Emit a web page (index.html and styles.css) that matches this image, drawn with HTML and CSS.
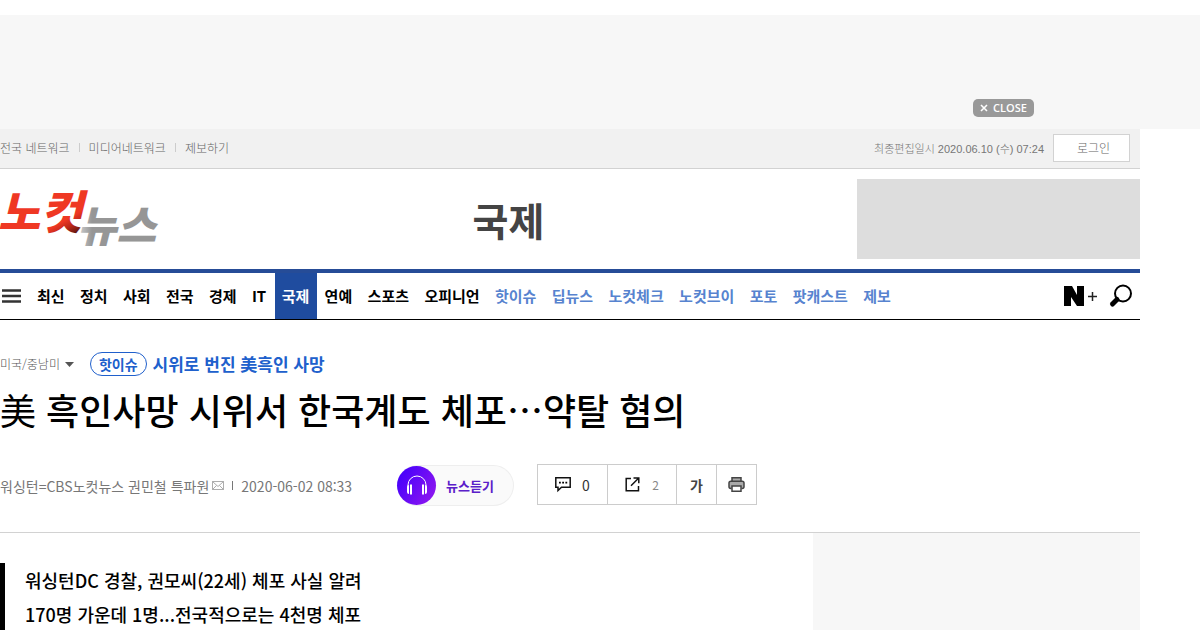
FILE: index.html
```html
<!DOCTYPE html>
<html lang="ko">
<head>
<meta charset="utf-8">
<title>美 흑인사망 시위서 한국계도 체포…약탈 혐의</title>
<link rel="stylesheet" href="styles.css">
</head>
<body>
<aside class="top-ad"><button class="close" type="button"><svg width="8" height="8" viewBox="0 0 8 8" aria-hidden="true"><path d="M1 1l6 6M7 1L1 7" stroke="#fff" stroke-width="1.6"/></svg>CLOSE</button></aside>
<div class="page">
  <div class="utility">
    <ul class="links">
      <li><a href="#">전국 네트워크</a></li>
      <li><a href="#">미디어네트워크</a></li>
      <li><a href="#">제보하기</a></li>
    </ul>
    <span class="updated">최종편집일시 2020.06.10 (수) 07:24</span>
    <button class="login" type="button">로그인</button>
  </div>
  <header class="masthead">
    <a class="logo" href="#" aria-label="노컷뉴스">
      <svg width="160" height="76" viewBox="0 0 160 76">
        <defs>
          <linearGradient id="red" gradientUnits="userSpaceOnUse" x1="60" y1="42" x2="71" y2="61"><stop offset="0" stop-color="#ef3823"/><stop offset=".4" stop-color="#b42618"/><stop offset="1" stop-color="#2a0d0a"/></linearGradient>
          <linearGradient id="gray" gradientUnits="userSpaceOnUse" x1="75" y1="0" x2="92" y2="0"><stop offset="0" stop-color="#ddd"/><stop offset="1" stop-color="#969696"/></linearGradient>
        </defs>
        <text class="logo-back" x="77" y="61" fill="url(#gray)">뉴스</text>
        <text class="logo-front" x="-2" y="48" fill="url(#red)">노컷</text>
      </svg>
    </a>
    <h2 class="section-name">국제</h2>
    <div class="banner"></div>
  </header>
  <nav class="gnb">
    <button class="menu" type="button" aria-label="전체메뉴"><svg width="19" height="14" viewBox="0 0 19 14"><path d="M0 1.5h19M0 7h19M0 12.5h19" stroke="#333" stroke-width="2.4"/></svg></button>
    <ul class="sections">
      <li><a href="#">최신</a></li><li><a href="#">정치</a></li><li><a href="#">사회</a></li><li><a href="#">전국</a></li><li><a href="#">경제</a></li><li><a href="#">IT</a></li>
      <li><a class="current" href="#">국제</a></li>
      <li><a href="#">연예</a></li><li><a href="#">스포츠</a></li><li><a href="#">오피니언</a></li>
      <li><a class="special" href="#">핫이슈</a></li><li><a class="special" href="#">딥뉴스</a></li><li><a class="special" href="#">노컷체크</a></li><li><a class="special" href="#">노컷브이</a></li><li><a class="special" href="#">포토</a></li><li><a class="special" href="#">팟캐스트</a></li><li><a class="special" href="#">제보</a></li>
    </ul>
    <a class="nplus" href="#" aria-label="N+"><svg width="33" height="20" viewBox="0 0 33 20"><path d="M0 0h8l5 9V0h7v20h-7L7 11v9H0z"/><path d="M24 10.500h9M28.500 6v9" stroke="#222" stroke-width="1.500"/></svg></a>
    <button class="search" type="button" aria-label="검색"><svg width="24" height="24" viewBox="0 0 24 24"><circle cx="14" cy="9.500" r="8" fill="#fff" stroke="#000" stroke-width="2"/><path d="M8 15.500L3.500 20" stroke="#000" stroke-width="5" stroke-linecap="round"/></svg></button>
  </nav>
  <main>
    <div class="article-head">
      <div class="topic">
        <button class="category" type="button">미국/중남미<svg width="9" height="5" viewBox="0 0 9 5"><path d="M0 0h9L4.500 5z" fill="#555"/></svg></button>
        <a class="issue" href="#"><span class="pill">핫이슈</span>시위로 번진 美흑인 사망</a>
      </div>
      <h1><span class="hanja">美</span> 흑인사망 시위서 한국계도 체포<span class="dots">⋯</span>약탈 혐의</h1>
      <div class="meta">
        <p class="byline">워싱턴=CBS노컷뉴스 권민철 특파원<a href="#" aria-label="메일"><svg width="12" height="9" viewBox="0 0 12 9"><path d="M.5.5h11v8H.5zL6 5.500 11.500.5M.5 8.500l4-4M11.500 8.500l-4-4" fill="none" stroke="#999" stroke-width=".8"/></svg></a><span class="bar"></span><time>2020-06-02 08:33</time></p>
        <button class="listen" type="button"><svg width="39" height="39" viewBox="0 0 39 39"><defs><linearGradient id="violet" x1="0" y1="0.2" x2="1" y2=".8"><stop offset="0" stop-color="#4300fc"/><stop offset="1" stop-color="#8f17ef"/></linearGradient></defs><circle cx="19.500" cy="19.500" r="19.500" fill="url(#violet)"/><path d="M11 21v-2a9 9 0 0 1 18 0v2" fill="none" stroke="#fff" stroke-width="1"/><path d="M10 21q0-2 2-2v9q-2 0-2-2zM13 18.500h2v10h-2zM25 18.500h2v10h-2zM28 19q2 0 2 2v5q0 2-2 2z" fill="#fff"/></svg><span>뉴스듣기</span></button>
        <div class="tools">
          <button class="wide" type="button" aria-label="댓글 0"><svg width="16" height="15" viewBox="0 0 16 15"><path d="M.8.8h14.400v9.400H6.500L3 13.500v-3.300H.8z" fill="none" stroke="#111" stroke-width="1.500"/><path d="M4 4.700h1.800v1.800H4zM7.200 4.700H9v1.800H7.200zM10.400 4.700h1.800v1.800h-1.800z"/></svg><span>0</span></button>
          <button class="wide share" type="button" aria-label="공유 2"><svg width="15" height="15" viewBox="0 0 15 15"><path d="M6 1.500H1.200v12.300h12.300V9M8.500 1h5.300v5.300M13.500 1.300L6 8.800" fill="none" stroke="#111" stroke-width="1.500"/></svg><span>2</span></button>
          <button class="font-size" type="button">가</button>
          <button type="button" aria-label="인쇄"><svg width="17" height="15" viewBox="0 0 17 15"><path d="M4 4V.8h9V4M3.500 11.500H2.800Q1 11.500 1 9.800V6q0-1.800 1.800-1.800h11.400Q16 4.200 16 6v3.800q0 1.700-1.800 1.700h-.7" fill="#aaa" stroke="#444" stroke-width="1.500"/><path d="M4 9h9v5.200H4z" fill="#fff" stroke="#444" stroke-width="1.500"/></svg></button>
        </div>
      </div>
    </div>
    <div class="columns">
      <article><p class="summary">워싱턴DC 경찰, 권모씨(22세) 체포 사실 알려<br>170명 가운데 1명...전국적으로는 4천명 체포</p></article>
      <aside class="side-ad"></aside>
    </div>
  </main>
</div>
</body>
</html>
```
FILE: styles.css
```css
* { box-sizing: border-box; }
body { margin: 0; padding-top: 15px; background: #fff; color: #000; font-family: "Noto Sans CJK KR", sans-serif; font-size: 14px; }
h1, h2, p, ul { margin: 0; padding: 0; }
ul { list-style: none; }
a { color: inherit; text-decoration: none; }
button { margin: 0; padding: 0; border: 0; background: none; color: inherit; font: inherit; cursor: pointer; }
svg { display: block; flex: none; overflow: visible; }

.top-ad { display: flex; align-items: flex-end; justify-content: flex-end; height: 114px; padding: 0 166px 12px 0; background: #f7f7f7; }
.close { display: flex; align-items: center; justify-content: center; gap: 5px; width: 61px; height: 18px; border-radius: 5px; background: #999; color: #fff; font: 600 11px/18px "Open Sans", sans-serif; }

.page { max-width: 1140px; }
.utility { display: flex; align-items: center; height: 40px; padding: 0 10px 2px 0; border-bottom: 1px solid #d2d2d2; background: #f1f1f1; color: #666; font-size: 12px; font-weight: 300; }
.links { display: flex; flex: 1; }
.links li { display: flex; align-items: center; }
.links li + li::before { content: ""; width: 1px; height: 9px; margin: 0 9px; background: #ccc; }
.updated { color: #777; font-family: "Liberation Sans", "Noto Sans CJK KR", sans-serif; font-size: 11px; }
.login { width: 77px; height: 28px; margin-left: 9px; padding-left: 4px; border: 1px solid #d2d2d2; background: #fff; }

.masthead { display: flex; align-items: center; justify-content: space-between; height: 100px; }
.logo-front, .logo-back { font-family: "Noto Sans CJK KR", sans-serif; font-weight: 900; font-style: italic; }
.logo-front { font-size: 46px; }
.logo-back { font-size: 43px; }
.section-name { color: #444; font-size: 39px; font-weight: 700; line-height: 60px; }
.banner { width: 283px; height: 80px; background: #ddd; }

.gnb { display: flex; align-items: center; height: 51px; border-top: 4px solid #264c97; border-bottom: 1px solid #000; }
.menu { margin: 0 9px 0 2px; }
.sections { display: flex; flex: 0 1 869px; justify-content: space-between; font-size: 15px; font-weight: 700; line-height: 46px; white-space: nowrap; }
.sections a { display: block; padding: 0 8px 0 7px; }
.sections .current { background: #1f4c9f; color: #fff; }
.sections .special { color: #5783cf; }
.nplus { margin: 0 12px 0 auto; }
.search { margin-right: 7px; }

.article-head { padding-top: 32px; border-bottom: 1px solid #d2d2d2; }
.topic { display: flex; align-items: center; gap: 16px; height: 24px; }
.category { display: flex; align-items: center; gap: 5px; color: #555; font-size: 12px; font-weight: 300; line-height: 22px; }
.issue { display: flex; align-items: center; gap: 6px; color: #2060cc; font-size: 17px; font-weight: 700; line-height: 24px; }
.pill { padding: 0 8px; border: 1px solid #2060cc; border-radius: 12px; font-size: 14px; line-height: 22px; }
h1 { margin-top: 5px; font-size: 36px; font-weight: 500; line-height: 56px; }
.hanja { font-weight: 400; }
.meta { display: flex; align-items: center; height: 41px; margin: 27px 0; }
.byline { display: flex; align-items: center; width: 397px; padding-top: 2px; color: #777; }
.byline a { margin: 0 8px 0 3px; }
.bar { width: 1px; height: 9px; margin-right: 8px; background: #777; }
.listen { display: flex; align-items: center; gap: 10px; width: 117px; height: 41px; margin-top: 2px; border: 1px solid #eee; border-left: 0; border-radius: 21px; background: #fafafa; color: #5b20c9; font-size: 13px; font-weight: 700; }
.tools { display: flex; height: 41px; margin-left: 23px; border: 1px solid #ccc; }
.tools button { display: flex; align-items: center; justify-content: center; width: 40px; color: #333; font-size: 14px; }
.tools button + button { border-left: 1px solid #ccc; }
.tools .wide { gap: 11px; width: 69px; }
.tools .share { gap: 12px; color: #888; font-size: 12px; }
.tools .font-size { color: #444; font-weight: 700; }

.columns { display: flex; }
.columns article { flex: 1; padding: 30px 30px 0 0; }
.summary { padding-left: 20px; border-left: 5px solid #000; font-size: 18px; font-weight: 500; line-height: 34px; }
.side-ad { width: 327px; background: #f7f7f7; }
```
